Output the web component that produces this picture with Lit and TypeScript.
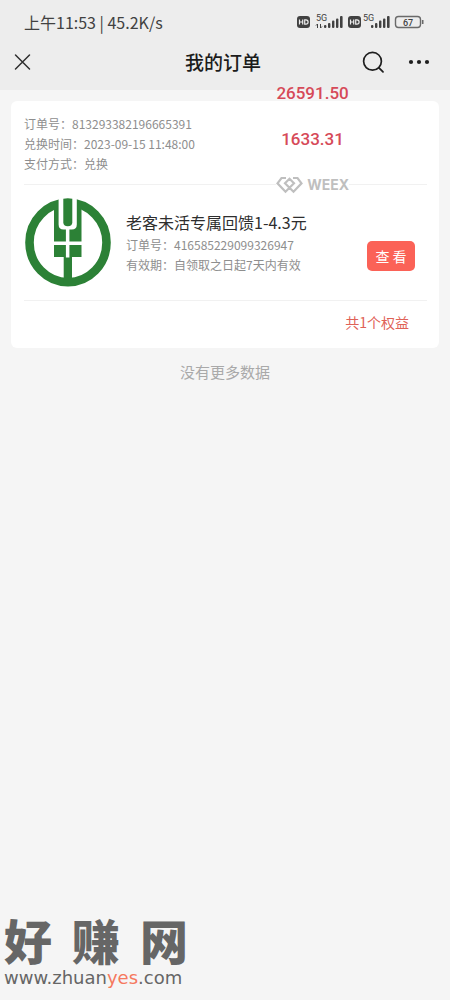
import { LitElement, html, css, svg } from "lit";
import { customElement, property } from "lit/decorators.js";

@customElement("status-bar")
class StatusBar extends LitElement {
  @property() time = "";
  @property() speed = "";

  static styles = css`
    :host { display: flex; justify-content: space-between; align-items: center; height: 44px; padding: 0 25px 0 24px; color: #414141; font-size: 16px; line-height: 20px; }
    .icons { display: flex; align-items: center; }
    svg { display: block; }
  `;

  render() {
    const signal = (x: number) => svg`
      <g fill="#414141" transform="translate(${x} 0)">
        <rect x="0" y="14" width="2.400" height="3" rx="1"/><rect x="4" y="12" width="2.400" height="5" rx="1"/>
        <rect x="8" y="9.500" width="2.400" height="7.500" rx="1"/><rect x="12" y="7.500" width="2.400" height="9.500" rx="1"/>
        <rect x="16" y="5" width="2.600" height="12" rx="1"/>
      </g>`;
    const hd = (x: number) => svg`
      <g transform="translate(${x} 0)">
        <rect x="0" y="5" width="13" height="12" rx="3" fill="#414141"/>
        <path d="M2.500 8.500v5M5.700 8.500v5M2.500 11h3.200M7.700 8.800h1.200a2.100 2.100 0 0 1 0 4.400H7.700z" fill="none" stroke="#ededed" stroke-width="1.200"/>
      </g>`;
    return html`
      <span>${this.time} | ${this.speed}</span>
      <div class="icons">
        <svg width="128" height="22" viewBox="0 0 128 22" role="img" aria-label="HD 5G 67%">
          ${hd(0)}
          <text x="19" y="10" font-size="9" font-family="Roboto, sans-serif" fill="#414141">5G</text>
          <path d="M20.500 17v-4l-1.500 1.500M23.500 13v4l1.500-1.500" fill="none" stroke="#414141"/>
          ${signal(27)} ${hd(51)}
          <text x="66" y="10" font-size="9" font-family="Roboto, sans-serif" fill="#414141">5G</text>
          ${signal(74)}
          <rect x="98.500" y="5.500" width="25" height="11" rx="3" fill="none" stroke="#6a6a6a" stroke-width="1.400"/>
          <path d="M125.700 9v4" stroke="#6a6a6a" stroke-width="1.600"/>
          <text x="111" y="14.500" text-anchor="middle" font-size="9" font-weight="500" font-family="Roboto, sans-serif" fill="#414141">67</text>
        </svg>
      </div>`;
  }
}

@customElement("nav-bar")
class NavBar extends LitElement {
  @property() heading = "";

  static styles = css`
    :host { display: grid; grid-template-columns: 1fr auto 1fr; align-items: center; height: 36px; padding: 0 19px 10px 12px; }
    h1 { margin: 0; font-size: 19px; line-height: 28px; font-weight: 500; color: #1c1c1c; padding-left: 3px; }
    button { border: 0; background: none; padding: 0; display: block; cursor: pointer; }
    .actions { display: flex; justify-content: flex-end; gap: 22px; }
    .close { width: 22px; }
    svg { display: block; }
  `;

  render() {
    return html`
      <button class="close" aria-label="关闭">
        <svg width="22" height="24" viewBox="0 0 22 24"><path d="M3.500 5l14 14M17.500 5l-14 14" stroke="#303030" stroke-width="1.500" fill="none" stroke-linecap="round"/></svg>
      </button>
      <h1>${this.heading}</h1>
      <div class="actions">
        <button aria-label="搜索">
          <svg width="24" height="24" viewBox="0 0 24 24"><circle cx="11.500" cy="11.300" r="8.900" stroke="#1f1f1f" stroke-width="1.700" fill="none"/><path d="M18 17.800l4 4" stroke="#1f1f1f" stroke-width="1.800" stroke-linecap="round"/></svg>
        </button>
        <button aria-label="更多">
          <svg width="24" height="24" viewBox="0 0 24 24" fill="#1f1f1f"><circle cx="4" cy="12" r="2.100"/><circle cx="12" cy="12" r="2.100"/><circle cx="20" cy="12" r="2.100"/></svg>
        </button>
      </div>`;
  }
}

@customElement("order-card")
class OrderCard extends LitElement {
  static styles = css`
    :host { display: block; background: #fff; border-radius: 6px; padding: 13px 12px 0 13px; font-size: 12px; line-height: 20px; color: #8e8e8e; }
    p, h2 { margin: 0; }
    .meta { padding-bottom: 10px; }
    .item { display: flex; border-top: 1px solid #f1f1f1; border-bottom: 1px solid #f1f1f1; padding: 13px 12px 12px 0; }
    .logo { flex: none; display: block; margin-right: 14px; }
    .info { flex: 1; padding-top: 11px; min-width: 0; }
    h2 { font-size: 16px; line-height: 26px; font-weight: 400; color: #2e2e2e; }
    .view { align-self: flex-end; margin-bottom: 17px; width: 48px; height: 30px; border: 0; border-radius: 5px; background: #fb6257; color: #fff; font: inherit; font-size: 14px; padding: 0; white-space: nowrap; }
    .total { text-align: right; padding: 11px 18px 16px 0; font-size: 14px; color: #df6257; }
  `;

  render() {
    return html`
      <div class="meta">
        <p>订单号：813293382196665391</p>
        <p>兑换时间：2023-09-15 11:48:00</p>
        <p>支付方式：兑换</p>
      </div>
      <div class="item">
        <svg class="logo" width="88" height="90" viewBox="0 0 88 90" aria-hidden="true">
          <ellipse cx="44" cy="44.500" rx="38.500" ry="39.700" fill="none" stroke="#2c8136" stroke-width="8.600"/>
          <path d="M30 6h27.500v37.500H30zM30 47h27.500v12H30zM39.700 58h8.300v28h-8.300z" fill="#2c8136"/>
          <path d="M34.600 0h18.200v26.500q0 5-5 5h-8.200q-5 0-5-5zM41.900 30h3.500v29.500h-3.500z" fill="#fff"/>
          <path d="M39.300.700q4.500-.800 9 0v23.500q0 4-4.500 4t-4.500-4z" fill="#2c8136"/>
        </svg>
        <div class="info">
          <h2>老客未活专属回馈1-4.3元</h2>
          <p>订单号：416585229099326947</p>
          <p>有效期：自领取之日起7天内有效</p>
        </div>
        <button class="view">查 看</button>
      </div>
      <p class="total">共1个权益</p>`;
  }
}

@customElement("app-root")
class AppRoot extends LitElement {
  static styles = css`
    :host { display: block; position: relative; min-height: 100vh; background: #f5f5f5; font-family: "Noto Sans CJK SC", sans-serif; }
    header { background: #ededed; }
    main { padding: 11px; }
    .end { margin: 13px 0 0; text-align: center; font-size: 15px; line-height: 22px; color: #a9a9a9; }
    .quotes { position: absolute; top: 82px; right: 101px; display: flex; flex-direction: column; align-items: center; font: 500 17px/22px Roboto, sans-serif; color: #d64a59; }
    .quotes span + span { margin-top: 24px; }
    .brand { display: flex; align-items: center; gap: 4px; margin-top: 24px; background: #fff; font: 700 14px/22px Inter, sans-serif; color: #bfbfbf; }
    .mark { position: absolute; left: 4px; bottom: 13px; width: 184px; color: #666; }
    .name { display: flex; justify-content: space-between; font-size: 48px; line-height: 48px; font-weight: 900; margin-bottom: 6px; }
    .site { display: block; font: 18px/18px "DejaVu Sans", sans-serif; color: inherit; text-decoration: none; }
    .site span { color: #f5795e; }
  `;

  render() {
    return html`
      <header>
        <status-bar time="上午11:53" speed="45.2K/s"></status-bar>
        <nav-bar heading="我的订单"></nav-bar>
      </header>
      <main>
        <order-card></order-card>
        <p class="end">没有更多数据</p>
      </main>
      <div class="quotes">
        <span>26591.50</span>
        <span>1633.31</span>
        <div class="brand">
          <svg width="27" height="18" viewBox="0 0 27 18" fill="none" stroke="#bfbfbf" stroke-width="2.200" aria-hidden="true">
            <path d="M10 2H5.500l-4 5.300L9.500 15.700 18 7.300 13.500 2.800 9 7.300l8.500 8.400 8-8.400-4-5.300H17"/>
          </svg>
          WEEX
        </div>
      </div>
      <div class="mark">
        <div class="name"><span>好</span><span>赚</span><span>网</span></div>
        <a class="site" href="#">www.zhuan<span>yes</span>.com</a>
      </div>`;
  }
}
